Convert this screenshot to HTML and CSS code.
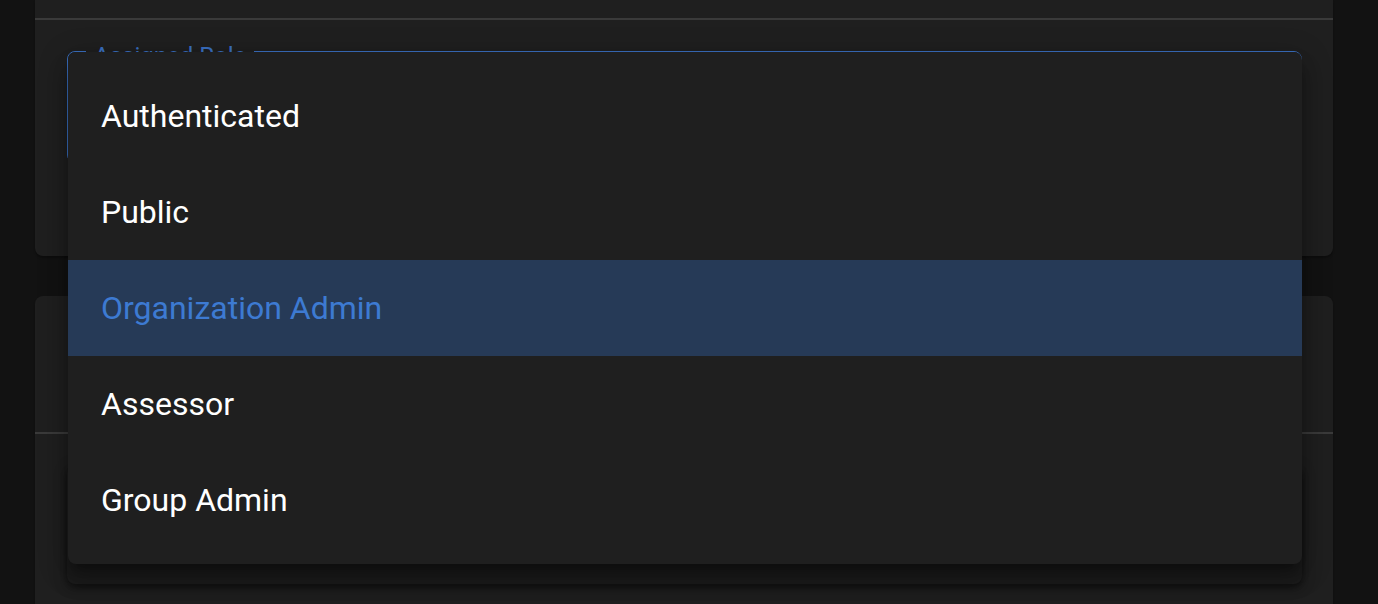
FILE: index.html
```html
<!DOCTYPE html>
<html lang="en">
<head>
<meta charset="utf-8">
<title>Assigned Role</title>
<link rel="stylesheet" href="styles.css">
</head>
<body>
<div class="page">
  <section class="card card-top">
    <div class="card-head"></div>
    <div class="divider"></div>
    <div class="card-body">
      <div class="field">
        <fieldset class="outline"><legend><span class="label">Assigned Role</span></legend></fieldset>
      </div>
    </div>
  </section>
  <section class="card card-second">
    <div class="card-head tall"></div>
    <div class="divider"></div>
    <div class="card-body">
      <div class="inner-box"></div>
    </div>
  </section>

  <ul class="menu" role="listbox">
    <li class="item">Authenticated</li>
    <li class="item">Public</li>
    <li class="item selected">Organization Admin</li>
    <li class="item">Assessor</li>
    <li class="item">Group Admin</li>
  </ul>
</div>
</body>
</html>
```

FILE: styles.css
```css
* { box-sizing: border-box; }
html, body {
  margin: 0;
  padding: 0;
  background: #121212;
  height: 604px;
  overflow: hidden;
  font-family: Roboto, "Liberation Sans", Arial, sans-serif;
}
.page {
  position: relative;
  width: 1378px;
  height: 604px;
  padding: 0 45px 0 35px;
  display: flex;
  flex-direction: column;
  gap: 40px;
}
.card {
  background: #1f1f1f;
  border-radius: 0 0 8px 8px;
  box-shadow: 0 2px 2px rgba(0,0,0,0.25);
  display: flex;
  flex-direction: column;
}
.card-second {
  border-radius: 8px 8px 0 0;
  flex: 1;
}
.card-head { height: 18px; }
.card-head.tall { height: 136px; }
.divider { height: 2px; background: #3a3a3a; }
.card-body { padding: 31px 31px 0 32px; }
.card-top .card-body { padding-bottom: 93px; }
.field {
  position: relative;
  height: 112px;
}
.outline {
  margin: 0;
  position: absolute;
  left: 0; right: 0;
  top: -17px; bottom: 0;
  border: 1.5px solid #3a6fc0;
  border-radius: 8px;
  padding: 0 18px;
}
.outline legend {
  padding: 0 8px;
  font-size: 24px;
  line-height: 34px;
  color: #3a6fc0;
}
.label {
  position: relative;
  top: 5px;
}
.inner-box {
  height: 119px;
  background: #1c1c1c;
  border-radius: 8px;
  box-shadow: 0 4px 6px rgba(0,0,0,0.35), 0 2px 14px rgba(0,0,0,0.25);
}
.menu {
  position: absolute;
  left: 68px;
  top: 52px;
  width: 1234px;
  margin: 0;
  padding: 16px 0;
  list-style: none;
  background: #1f1f1f;
  border-radius: 8px;
  box-shadow: 0 10px 10px -6px rgba(0,0,0,0.3), 0 16px 20px 2px rgba(0,0,0,0.2), 0 6px 28px 4px rgba(0,0,0,0.18);
}
.item {
  height: 96px;
  display: flex;
  align-items: center;
  padding: 0 32px 0 33px;
  font-size: 32px;
  color: #ffffff;
}
.item.selected {
  background: #263a57;
  color: #3d7ad2;
}
```
